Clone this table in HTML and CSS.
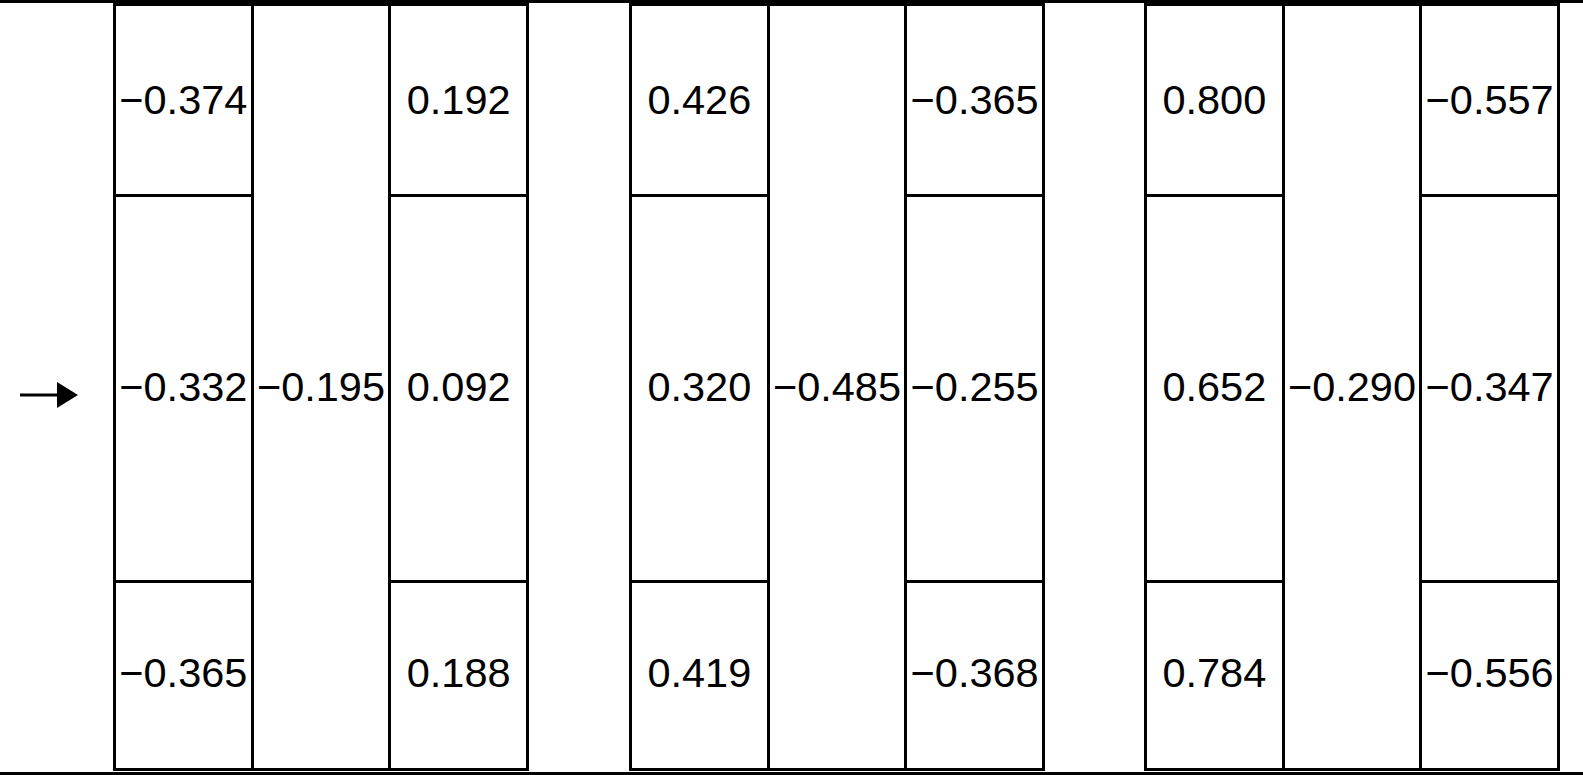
FILE: index.html
```
<!DOCTYPE html>
<html>
<head>
<meta charset="utf-8">
<link rel="stylesheet" href="styles.css">
</head>
<body>
<div class="sheet">
  <div class="arrow-col">
    <svg class="arrow" width="60" height="26" viewBox="0 0 60 26">
      <line x1="0" y1="13" x2="40" y2="13" stroke="#000" stroke-width="3"/>
      <polygon points="37,0 58,13 37,26" fill="#000"/>
    </svg>
  </div>
  <div class="group g1">
    <div class="cell r1 c1">−0.374</div>
    <div class="cell mid">−0.195</div>
    <div class="cell r1 c3">0.192</div>
    <div class="cell r2 c1">−0.332</div>
    <div class="cell r2 c3">0.092</div>
    <div class="cell r3 c1">−0.365</div>
    <div class="cell r3 c3">0.188</div>
  </div>
  <div class="group g2">
    <div class="cell r1 c1">0.426</div>
    <div class="cell mid">−0.485</div>
    <div class="cell r1 c3">−0.365</div>
    <div class="cell r2 c1">0.320</div>
    <div class="cell r2 c3">−0.255</div>
    <div class="cell r3 c1">0.419</div>
    <div class="cell r3 c3">−0.368</div>
  </div>
  <div class="group g3">
    <div class="cell r1 c1">0.800</div>
    <div class="cell mid">−0.290</div>
    <div class="cell r1 c3">−0.557</div>
    <div class="cell r2 c1">0.652</div>
    <div class="cell r2 c3">−0.347</div>
    <div class="cell r3 c1">0.784</div>
    <div class="cell r3 c3">−0.556</div>
  </div>
</div>
</body>
</html>
```
FILE: styles.css
```
html, body {
  margin: 0;
  padding: 0;
  background: #fff;
}
body {
  width: 1583px;
  height: 775px;
  overflow: hidden;
  font-family: "Liberation Sans", Arial, sans-serif;
  color: #000;
}
.sheet {
  box-sizing: border-box;
  width: 1583px;
  height: 775px;
  border-top: 3px solid #000;
  border-bottom: 3px solid #000;
  padding-bottom: 1px;
  display: flex;
  align-items: stretch;
}
.arrow-col {
  box-sizing: border-box;
  width: 113px;
  flex: none;
  display: flex;
  align-items: center;
  padding-left: 20px;
  padding-top: 16px;
}
.arrow {
  display: block;
}
.group {
  flex: none;
  box-sizing: border-box;
  width: 416px;
  border: 3px solid #000;
  background: #000;
  display: grid;
  grid-template-columns: 1fr 1fr 1fr;
  grid-template-rows: 188px 383px 1fr;
  gap: 3px;
}
.g2 { margin-left: 100px; }
.g3 { margin-left: 99px; }
.cell {
  background: #fff;
  display: flex;
  align-items: center;
  justify-content: center;
  font-size: 41.5px;
  line-height: 1;
  white-space: nowrap;
  padding-bottom: 3px;
}
.mid {
  grid-column: 2;
  grid-row: 1 / 4;
  padding-bottom: 0;
}
.c1 { grid-column: 1; }
.c3 { grid-column: 3; }
.r1 { grid-row: 1; padding-bottom: 1px; }
.r2 { grid-row: 2; }
.r3 { grid-row: 3; padding-bottom: 5px; }
```
